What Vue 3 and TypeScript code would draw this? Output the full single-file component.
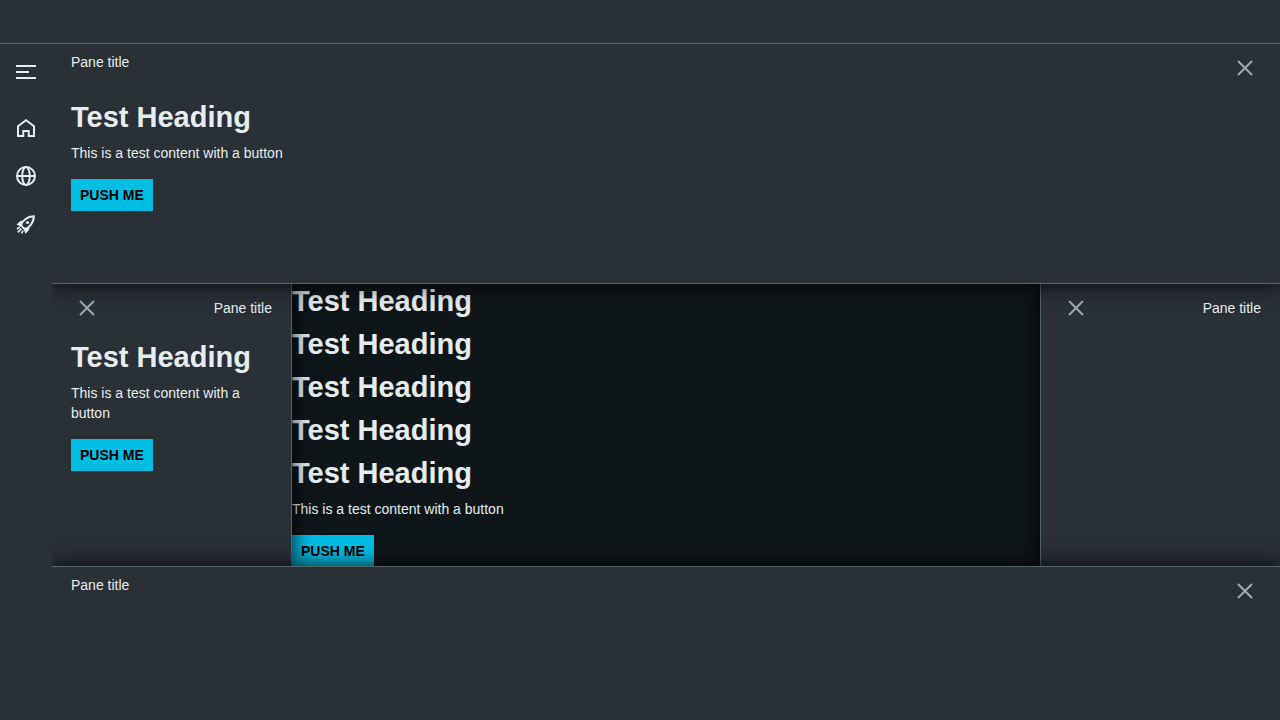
<script setup lang="ts">
import { ref } from 'vue'

const panes = ref({ top: true, left: true, right: true, bottom: true })
const closeIcon = 'M1 1 L15 15 M15 1 L1 15'
const headings = [1, 2, 3, 4, 5]
</script>

<template>
  <div class="app">
    <header class="app-header"></header>
    <div class="body">
      <nav class="menu" aria-label="Main">
        <button class="menu-item toggle" type="button" aria-label="Expand menu">
          <svg width="20" height="14" viewBox="0 0 20 14"><path d="M0 0h20v2H0zM0 6h13v2H0zM0 12h20v2H0z" /></svg>
        </button>
        <button class="menu-item" type="button" aria-label="Home">
          <svg class="line" width="24" height="24" viewBox="0 0 24 24"><path d="M4 10.300 12 4.300l8 6V20h-5.300v-5H9.300v5H4z" /></svg>
        </button>
        <button class="menu-item" type="button" aria-label="Network">
          <svg class="line" width="24" height="24" viewBox="0 0 24 24"><circle cx="12" cy="12" r="9" /><ellipse cx="12" cy="12" rx="3.800" ry="9" /><path d="M3 12h18" /></svg>
        </button>
        <button class="menu-item" type="button" aria-label="Launch">
          <svg class="line" width="24" height="24" viewBox="0 0 24 24">
            <path d="M7 13.500C8 9 13 4.300 19.800 4.200c0 6.800-4.800 11.800-9.300 12.800z" />
            <path class="solid" d="M8.500 8.600 6 9.200 2.500 12.800 7 14.500zM15.500 15.500 15 18 11.500 21.700 9.500 17z" />
            <circle class="solid" cx="13.500" cy="10.500" r="1.600" />
            <path class="flame" d="M5.800 14.800 3 17.200M7.300 16.700 3.800 20.300M9 18.700 7.500 21.300" />
          </svg>
        </button>
      </nav>

      <div class="layout">
        <section v-if="panes.top" class="pane pane-top">
          <div class="pane-header">
            <span>Pane title</span>
            <button class="close" type="button" aria-label="Close top pane" @click="panes.top = false">
              <svg width="16" height="16" viewBox="0 0 16 16"><path :d="closeIcon" /></svg>
            </button>
          </div>
          <div class="pane-content">
            <h1>Test Heading</h1>
            <p>This is a test content with a button</p>
            <button class="primary" type="button">PUSH ME</button>
          </div>
        </section>

        <div class="middle">
          <section v-if="panes.left" class="pane pane-left">
            <div class="pane-header side">
              <button class="close" type="button" aria-label="Close left pane" @click="panes.left = false">
                <svg width="16" height="16" viewBox="0 0 16 16"><path :d="closeIcon" /></svg>
              </button>
              <span>Pane title</span>
            </div>
            <div class="pane-content">
              <h1>Test Heading</h1>
              <p>This is a test content with a button</p>
              <button class="primary" type="button">PUSH ME</button>
            </div>
          </section>

          <main class="content">
            <h1 v-for="n in headings" :key="n">Test Heading</h1>
            <p>This is a test content with a button</p>
            <button class="primary" type="button">PUSH ME</button>
          </main>

          <section v-if="panes.right" class="pane pane-right">
            <div class="pane-header side">
              <button class="close" type="button" aria-label="Close right pane" @click="panes.right = false">
                <svg width="16" height="16" viewBox="0 0 16 16"><path :d="closeIcon" /></svg>
              </button>
              <span>Pane title</span>
            </div>
          </section>
        </div>

        <section v-if="panes.bottom" class="pane pane-bottom">
          <div class="pane-header">
            <span>Pane title</span>
            <button class="close" type="button" aria-label="Close bottom pane" @click="panes.bottom = false">
              <svg width="16" height="16" viewBox="0 0 16 16"><path :d="closeIcon" /></svg>
            </button>
          </div>
        </section>
      </div>
    </div>
  </div>
</template>

<style>
body {
  margin: 0;
  background: #293036;
}
</style>

<style scoped>
.app,
.app * {
  box-sizing: border-box;
}

.app {
  --surface: #293036;
  --line: #566567;
  display: flex;
  flex-direction: column;
  height: 100vh;
  overflow: hidden;
  background: #0f1619;
  color: #e5edf0;
  font-family: "Liberation Sans", Arial, sans-serif;
  font-size: 14px;
  line-height: 20px;
}

.app-header {
  flex: none;
  height: 44px;
  background: var(--surface);
  border-bottom: 1px solid var(--line);
}

.body {
  display: flex;
  flex: 1;
  min-height: 0;
}

.menu {
  display: flex;
  flex-direction: column;
  flex: none;
  width: 52px;
  padding-top: 4px;
  background: var(--surface);
}

.menu-item {
  display: flex;
  align-items: center;
  justify-content: center;
  height: 48px;
  padding: 0;
  border: 0;
  background: none;
  color: inherit;
}

.toggle {
  margin-bottom: 8px;
}

.menu-item svg {
  fill: currentColor;
}

.menu-item .line {
  fill: none;
  stroke: currentColor;
  stroke-width: 2;
}

.menu-item .solid {
  fill: currentColor;
  stroke: none;
}

.menu-item .flame {
  stroke-width: 1.7;
}

.layout {
  display: flex;
  flex: 1;
  flex-direction: column;
  min-width: 0;
  overflow: hidden;
}

.pane {
  position: relative;
  flex: none;
  background: var(--surface);
  border: 0 solid var(--line);
  box-shadow: 0 0 20px rgba(0, 0, 0, 0.9);
}

.pane-top {
  z-index: 2;
  height: 240px;
  border-bottom-width: 1px;
}

.pane-bottom {
  z-index: 2;
  height: 154px;
  border-top-width: 1px;
}

.pane-left {
  z-index: 1;
  width: 240px;
  border-right-width: 1px;
}

.pane-right {
  z-index: 1;
  width: 240px;
  border-left-width: 1px;
}

.middle {
  display: flex;
  flex: 1;
  min-height: 0;
}

.content {
  flex: 1;
  min-width: 0;
  overflow: hidden;
}

.pane-header {
  display: flex;
  align-items: flex-start;
  justify-content: space-between;
  height: 48px;
  padding: 8px 19px;
}

.side {
  align-items: center;
}

.pane-content {
  padding: 8px 19px;
}

h1 {
  margin: 0 0 8px;
  font-size: 29px;
  font-weight: 700;
  line-height: 35px;
}

p {
  margin: 0 0 16px;
}

.close {
  display: flex;
  align-items: center;
  justify-content: center;
  width: 32px;
  height: 32px;
  padding: 0;
  border: 0;
  background: none;
  color: #9eabb1;
}

.close path {
  fill: none;
  stroke: currentColor;
  stroke-width: 2;
}

.primary {
  display: block;
  height: 32px;
  padding: 0 8px;
  border: 1px solid #00bde3;
  background: #00bde3;
  color: #000;
  font: inherit;
  font-weight: 700;
}
</style>
